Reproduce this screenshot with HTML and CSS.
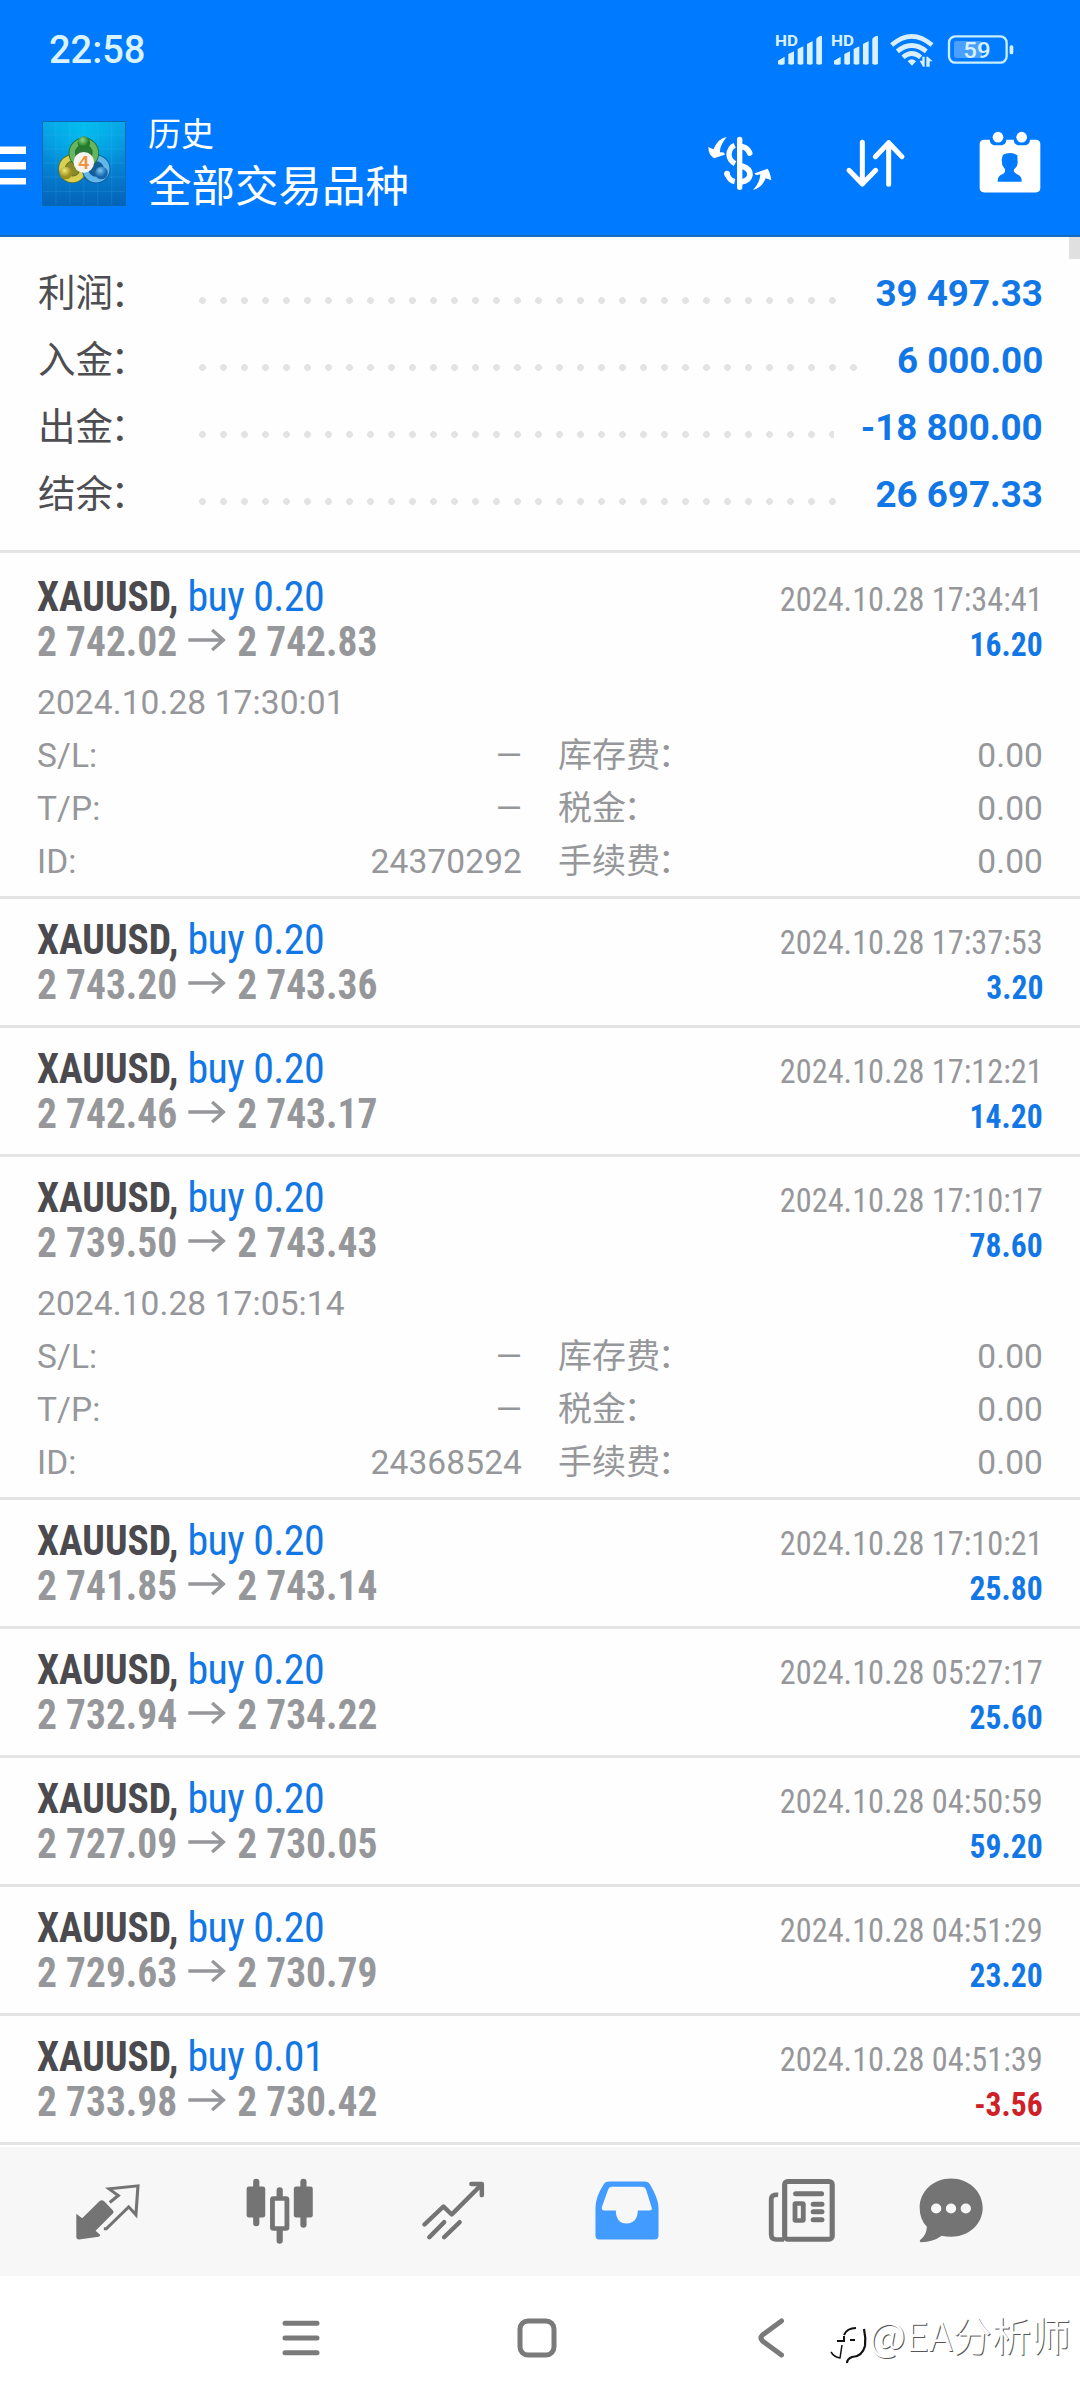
FILE: index.html
```
<!DOCTYPE html>
<html lang="zh-CN">
<head>
<meta charset="utf-8">
<title>历史</title>
<link rel="stylesheet" href="styles.css">
</head>
<body>
<header class="header">
  <div class="status">
    <span class="clock">22:58</span>
    <svg class="signal" viewBox="345 90 145 120"><text class="hd" x="345" y="137" textLength="69" lengthAdjust="spacingAndGlyphs">HD</text><path d="M354 192v-10l20-12v22q-3 3-10 2q-8 1-10-2zM385 192v-30l17-8v38q-8 4-17 0zM413 192v-45l17-8v53q-8 4-17 0zM441 192v-60l17-9v69q-8 4-17 0zM469 192v-74q2-9 17-11v85q-8 4-17 0z"/></svg>
    <svg class="signal second" viewBox="345 90 145 120"><text class="hd" x="345" y="137" textLength="69" lengthAdjust="spacingAndGlyphs">HD</text><path d="M354 192v-10l20-12v22q-3 3-10 2q-8 1-10-2zM385 192v-30l17-8v38q-8 4-17 0zM413 192v-45l17-8v53q-8 4-17 0zM441 192v-60l17-9v69q-8 4-17 0zM469 192v-74q2-9 17-11v85q-8 4-17 0z"/></svg>
    <svg class="wifi" viewBox="690 90 132 120"><g fill="none" stroke="#d9efff" stroke-width="14"><path d="M695 135Q755 83 816 135"/><path d="M712 154Q755 119 799 154"/><path d="M729 172Q755 149 782 172"/></g><path d="M743 184q12-12 25 0l-12 13zM779 182h8v-12h7v30h-5zM799 200v-30h4l15 14h-9v16z"/></svg>
    <svg class="battery" viewBox="860 90 202 120"><rect x="881" y="123" width="84" height="51" rx="7" fill="#4ba0ff"/><rect x="866" y="109" width="173" height="79" rx="19" fill="none" stroke="#c9eeff" stroke-width="7"/><rect x="1048" y="136" width="11" height="27" rx="5"/><text class="level" x="909" y="174" textLength="82" lengthAdjust="spacingAndGlyphs">59</text></svg>
  </div>
  <div class="appbar">
    <svg class="menu" viewBox="0 0 26 40"><path d="M0 1.500h26v7.500H0zM0 17h26v7.500H0zM0 33h26v6.500H0z"/></svg>
    <svg class="logo" viewBox="36 34 253 255" preserveAspectRatio="none">
      <defs>
        <linearGradient id="sky" x1="0" y1="0" x2="0" y2="1"><stop offset="0" stop-color="#0aa3e6"/><stop offset=".5" stop-color="#0585d4"/><stop offset="1" stop-color="#0462b8"/></linearGradient>
        <radialGradient id="glow" cx=".5" cy=".08" r=".6"><stop offset="0" stop-color="#00c0f0" stop-opacity=".9"/><stop offset="1" stop-color="#00c0f0" stop-opacity="0"/></radialGradient>
        <radialGradient id="green" cx=".4" cy=".3"><stop offset="0" stop-color="#8fd884"/><stop offset="1" stop-color="#237a2b"/></radialGradient>
        <radialGradient id="gold" cx=".4" cy=".3"><stop offset="0" stop-color="#f1e978"/><stop offset="1" stop-color="#9c8f1c"/></radialGradient>
        <radialGradient id="blue" cx=".4" cy=".3"><stop offset="0" stop-color="#7fc8f3"/><stop offset="1" stop-color="#1666ac"/></radialGradient>
      </defs>
      <path fill="url(#sky)" d="M36 34h253v255H36z"/><path fill="url(#glow)" d="M36 34h253v255H36z"/>
      <path stroke="#5cc4f4" stroke-opacity=".25" stroke-width="2" fill="none" d="M37 76h251M37 118h251M37 160h251M37 202h251M37 245h251M78 35v253M120 35v253M162 35v253M204 35v253M246 35v253"/>
      <path fill="none" stroke="#0b66b4" stroke-width="3" d="M37.500 35.500h250v252h-250z"/>
      <path d="M90 197Q84 145 119 134Q126 94 161 80Q201 90 206 134Q239 149 235 194Q209 229 161 207Q115 235 90 197" fill="#0a5b95" opacity=".5"/>
      <circle cx="128" cy="177" r="32" fill="#8a8828" stroke="#5f7225" stroke-width="22"/><circle cx="128" cy="177" r="32" fill="none" stroke="#d8d04e" stroke-width="17"/>
      <circle cx="199" cy="178" r="32" fill="#155f99" stroke="#0d5c9b" stroke-width="22"/><circle cx="199" cy="178" r="32" fill="none" stroke="#62b6ea" stroke-width="17"/>
      <circle cx="162" cy="130" r="35" fill="#2c7a38" stroke="#1c6b2d" stroke-width="22"/><circle cx="162" cy="130" r="35" fill="none" stroke="#67b55c" stroke-width="17"/>
      <circle cx="162" cy="99" r="19" fill="url(#green)"/><circle cx="108" cy="190" r="19" fill="url(#gold)"/><circle cx="215" cy="190" r="19" fill="url(#blue)"/>
      <circle cx="162" cy="158" r="31" fill="#f5f4f1"/><text class="four" x="162" y="179" text-anchor="middle">4</text>
    </svg>
    <div class="titles"><div class="small">历史</div><div class="large">全部交易品种</div></div>
    <svg class="dollar" viewBox="140 405 200 171"><g fill="none" stroke="#fff"><path stroke-width="16" stroke-linecap="round" d="M238 418v144"/><path stroke-width="16" d="M223 436Q207 443 206 464Q207 482 224 491M223 545Q205 541 199 518" /><path stroke-width="17" stroke-linecap="round" d="M246 440Q262 443 268 459M246 499Q269 506 269 524Q267 541 246 545"/></g><circle cx="200" cy="521" r="8.500"/><path d="M199 411Q174 414 159 448L144 441Q144 464 161 475L193 464Q194 455 179 457Q177 438 199 411zM278 570Q305 563 316 535L333 541Q330 519 322 506L283 520Q283 528 300 523Q299 548 278 570z"/></svg>
    <svg class="sort" viewBox="555 414 183 153"><path fill="none" stroke="#fff" stroke-width="15" stroke-linecap="round" stroke-linejoin="round" d="M607 427v125M567 511l40 41l40-41M686 553V428M646 470l40-42l40 42"/></svg>
    <svg class="calendar" viewBox="955 390.500 192 200"><path fill-rule="evenodd" d="M974 420H990Q991 435 1003 436H1027Q1039 435 1040 420H1062Q1063 435 1075 436H1098Q1110 435 1111 420H1128Q1142 420 1142 434V564Q1142 578 1128 578H974Q960 578 960 564V434Q960 420 974 420zM1029 467L1026 480L1028 496L1036 508Q1038 521 1026 524Q1013 529 1014 546H1086Q1087 529 1074 524Q1060 518 1063 508Q1074 500 1074 488L1073 466Q1058 457 1046 460Q1032 461 1029 467z"/><circle cx="1015" cy="412" r="16"/><circle cx="1086" cy="412" r="16"/></svg>
  </div>
</header>
<div class="scrollbar"></div>
<section class="summary">
  <div class="sum"><span class="label">利润<span class="colon">：</span></span><i class="dots"></i><b>39 497.33</b></div>
  <div class="sum"><span class="label">入金<span class="colon">：</span></span><i class="dots"></i><b>6 000.00</b></div>
  <div class="sum"><span class="label">出金<span class="colon">：</span></span><i class="dots"></i><b>-18 800.00</b></div>
  <div class="sum"><span class="label">结余<span class="colon">：</span></span><i class="dots"></i><b>26 697.33</b></div>
</section>
<main class="deals">
  <article class="deal open">
    <div class="line"><span class="name"><b>XAUUSD,</b> buy 0.20</span><span class="time">2024.10.28 17:34:41</span></div>
    <div class="line"><span class="price">2 742.02<svg class="arrow" viewBox="0 0 40 22"><path d="M0 11h37M25.500 1l12 10l-12 10"/></svg>2 742.83</span><b class="profit">16.20</b></div>
    <div class="details">
      <div class="date">2024.10.28 17:30:01</div>
      <div class="cell"><span>S/L:</span><span>—</span></div><div class="cell"><span class="zh">库存费<span class="colon">：</span></span><span>0.00</span></div>
      <div class="cell"><span>T/P:</span><span>—</span></div><div class="cell"><span class="zh">税金<span class="colon">：</span></span><span>0.00</span></div>
      <div class="cell"><span>ID:</span><span>24370292</span></div><div class="cell"><span class="zh">手续费<span class="colon">：</span></span><span>0.00</span></div>
    </div>
  </article>
  <article class="deal">
    <div class="line"><span class="name"><b>XAUUSD,</b> buy 0.20</span><span class="time">2024.10.28 17:37:53</span></div>
    <div class="line"><span class="price">2 743.20<svg class="arrow" viewBox="0 0 40 22"><path d="M0 11h37M25.500 1l12 10l-12 10"/></svg>2 743.36</span><b class="profit">3.20</b></div>
  </article>
  <article class="deal">
    <div class="line"><span class="name"><b>XAUUSD,</b> buy 0.20</span><span class="time">2024.10.28 17:12:21</span></div>
    <div class="line"><span class="price">2 742.46<svg class="arrow" viewBox="0 0 40 22"><path d="M0 11h37M25.500 1l12 10l-12 10"/></svg>2 743.17</span><b class="profit">14.20</b></div>
  </article>
  <article class="deal open">
    <div class="line"><span class="name"><b>XAUUSD,</b> buy 0.20</span><span class="time">2024.10.28 17:10:17</span></div>
    <div class="line"><span class="price">2 739.50<svg class="arrow" viewBox="0 0 40 22"><path d="M0 11h37M25.500 1l12 10l-12 10"/></svg>2 743.43</span><b class="profit">78.60</b></div>
    <div class="details">
      <div class="date">2024.10.28 17:05:14</div>
      <div class="cell"><span>S/L:</span><span>—</span></div><div class="cell"><span class="zh">库存费<span class="colon">：</span></span><span>0.00</span></div>
      <div class="cell"><span>T/P:</span><span>—</span></div><div class="cell"><span class="zh">税金<span class="colon">：</span></span><span>0.00</span></div>
      <div class="cell"><span>ID:</span><span>24368524</span></div><div class="cell"><span class="zh">手续费<span class="colon">：</span></span><span>0.00</span></div>
    </div>
  </article>
  <article class="deal">
    <div class="line"><span class="name"><b>XAUUSD,</b> buy 0.20</span><span class="time">2024.10.28 17:10:21</span></div>
    <div class="line"><span class="price">2 741.85<svg class="arrow" viewBox="0 0 40 22"><path d="M0 11h37M25.500 1l12 10l-12 10"/></svg>2 743.14</span><b class="profit">25.80</b></div>
  </article>
  <article class="deal">
    <div class="line"><span class="name"><b>XAUUSD,</b> buy 0.20</span><span class="time">2024.10.28 05:27:17</span></div>
    <div class="line"><span class="price">2 732.94<svg class="arrow" viewBox="0 0 40 22"><path d="M0 11h37M25.500 1l12 10l-12 10"/></svg>2 734.22</span><b class="profit">25.60</b></div>
  </article>
  <article class="deal">
    <div class="line"><span class="name"><b>XAUUSD,</b> buy 0.20</span><span class="time">2024.10.28 04:50:59</span></div>
    <div class="line"><span class="price">2 727.09<svg class="arrow" viewBox="0 0 40 22"><path d="M0 11h37M25.500 1l12 10l-12 10"/></svg>2 730.05</span><b class="profit">59.20</b></div>
  </article>
  <article class="deal">
    <div class="line"><span class="name"><b>XAUUSD,</b> buy 0.20</span><span class="time">2024.10.28 04:51:29</span></div>
    <div class="line"><span class="price">2 729.63<svg class="arrow" viewBox="0 0 40 22"><path d="M0 11h37M25.500 1l12 10l-12 10"/></svg>2 730.79</span><b class="profit">23.20</b></div>
  </article>
  <article class="deal">
    <div class="line"><span class="name"><b>XAUUSD,</b> buy 0.01</span><span class="time">2024.10.28 04:51:39</span></div>
    <div class="line"><span class="price">2 733.98<svg class="arrow" viewBox="0 0 40 22"><path d="M0 11h37M25.500 1l12 10l-12 10"/></svg>2 730.42</span><b class="profit loss">-3.56</b></div>
  </article>
</main>
<nav class="tabs">
  <svg viewBox="208.500 136.500 209 216" preserveAspectRatio="none"><path d="M221 250L238 263L288 212Q295 206 302 212L327 239Q332 244 327 249L277 301L290 313Q291 318 286 319L229 327Q221 327 221 319z"/><path fill="none" stroke="#747474" stroke-width="9" d="M318 216L343 195L316 175L400 166L394 253L373 229L308 295H301"/></svg>
  <svg viewBox="712.300 136.500 209 216" preserveAspectRatio="none"><rect x="717" y="168" width="54" height="93" rx="7"/><rect x="854" y="168" width="55" height="93" rx="7"/><rect x="792" y="204" width="42" height="90" rx="3" fill="none" stroke="#747474" stroke-width="14"/><path fill="none" stroke="#747474" stroke-width="18" stroke-linecap="round" d="M745 154v124M882 154v129M813 179v20M813 302v29"/></svg>
  <svg viewBox="1216.100 136.500 209 216" preserveAspectRatio="none"><path fill="none" stroke="#747474" stroke-width="13" stroke-linecap="round" stroke-linejoin="round" d="M1232 282L1287 228L1311 252L1395 165M1368 160.500H1398.500V194M1246 320L1289 275M1289 320L1334 275"/></svg>
  <svg viewBox="151.900 136.500 209 216" preserveAspectRatio="none"><path fill="#429bff" fill-rule="evenodd" d="M203 153H306Q316 153 320 161Q345 204 345 232V316Q345 327 334 327H173Q162 327 162 316V232Q162 199 187 160Q191 153 203 153zM210 169Q202 169 199 176L181 229Q178 240 187 240H221Q222 279 252 279Q284 278 285 240H318Q328 240 325 231L309 178Q306 169 297 169z"/></svg>
  <svg viewBox="655.800 136.500 209 216" preserveAspectRatio="none"><g fill="none" stroke="#747474"><rect x="710" y="153" width="138" height="173" rx="9" stroke-width="15"/><path stroke-width="14" d="M691 193Q671 191 671 207V312Q671 327 686 327H708"/><rect x="740" y="219" width="24" height="51" rx="2" stroke-width="14"/><path stroke-width="15" stroke-linecap="round" d="M742 190h75M793 221h25M793 244h25M793 268h25"/></g></svg>
  <svg class="chat" viewBox="1088.500 136.500 209 216" preserveAspectRatio="none"><path fill-rule="evenodd" d="M1193 144C1244 144 1285 182 1285 232S1244 319 1193 319Q1178 319 1166 316Q1141 335 1106 335Q1099 333 1105 327Q1122 314 1123 289Q1102 267 1102 232C1102 182 1142 144 1193 144zM1135 234a15 15 0 1 0 30 0a15 15 0 1 0-30 0M1178 234a15 15 0 1 0 30 0a15 15 0 1 0-30 0M1221 234a15 15 0 1 0 30 0a15 15 0 1 0-30 0"/></svg>
</nav>
<footer class="system">
  <svg class="recent" viewBox="0 0 38 40"><path d="M3 5.300h32M3 20h32M3 34.700h32"/></svg>
  <svg class="home" viewBox="0 0 40 40"><rect x="3" y="3" width="34" height="34" rx="8"/></svg>
  <svg class="back" viewBox="0 0 26 40"><path d="M23.500 3L4.500 17Q1.500 20 4.500 23L23.500 37"/></svg>
</footer>
<div class="watermark"><svg viewBox="830 2324 38 44"><g fill="none" stroke="#111"><path stroke-width="2" d="M844 2335Q847 2328 856 2328M837 2341H844V2336M850 2340H855"/><path stroke-width="1.500" d="M831 2352Q834 2357 840 2358L842 2345"/><path stroke-width="2.200" d="M864 2329Q866 2338 865 2346Q862 2357 852 2357Q847 2359 847 2363"/></g></svg><span>@EA分析师</span></div>
</body>
</html>
```
FILE: styles.css
```
* { box-sizing: border-box; }
body { margin: 0; width: 1080px; height: 2400px; overflow: hidden; position: relative; background: #fefefe; font-family: Roboto, "Noto Sans CJK SC", sans-serif; }
svg { display: block; flex: none; }
.header { height: 237px; background: #007aff; border-bottom: 2px solid #176cbf; color: #fff; }
.header svg { fill: #fff; }
.status { height: 100px; padding: 0 66px 0 49px; display: flex; align-items: center; }
.clock { margin-right: auto; font-size: 38px; line-height: 100px; font-weight: 500; color: #d9f3ff; }
.header .status svg { height: 40px; fill: #d9f1ff; }
.signal { width: 48.300px; }
.second { margin-left: 7.700px; }
.wifi { width: 44px; margin-left: 10.700px; }
.battery { width: 67.300px; margin-left: 12.700px; }
.hd { font: 700 44px Roboto, sans-serif; }
.level { font: 500 68px Roboto, sans-serif; }
.appbar { height: 127px; padding-right: 37.700px; display: flex; align-items: center; }
.menu { width: 26px; height: 40px; margin-top: 3px; }
.logo { width: 84px; height: 85px; margin-left: 16px; }
.four { font: bold 57px "Liberation Sans", sans-serif; fill: #ee9440; }
.titles { margin: 0 auto 0 22px; font-weight: 400; }
.small { font-size: 33px; line-height: 48px; }
.large { font-size: 43.500px; line-height: 58px; }
.dollar { width: 66.700px; height: 57px; }
.sort { width: 61px; height: 51px; margin-left: 71.700px; }
.calendar { width: 64px; height: 66.700px; margin-left: 72.300px; }
.scrollbar { position: absolute; right: 0; top: 237px; width: 11px; height: 22px; background: #e0e0e0; }
.summary { height: 316px; padding: 22.600px 37px 0 38px; border-bottom: 3px solid #e4e4e4; }
.sum { height: 67px; line-height: 67px; display: flex; font-size: 37.500px; color: #1277e6; white-space: nowrap; }
.sum b { transform: scaleX(.98); transform-origin: right; }
.label { width: 154.300px; color: #4d4d52; }
.colon { margin-left: -2.500px; }
.dots { flex: 1; height: 7px; margin: 37.600px 23.500px 0 0; background: radial-gradient(circle, #e3e3e3 3.100px, transparent 3.700px) left center / 21px 7px repeat-x; }
.deals { padding-top: 3px; }
.deal { height: 129px; padding: 18px 37px 0 37px; border-bottom: 3px solid #e4e4e4; font-family: "Roboto Condensed", sans-serif; }
.open { height: 343px; }
.line { display: flex; justify-content: space-between; align-items: baseline; height: 45px; line-height: 45px; white-space: nowrap; }
.name { font-size: 42px; letter-spacing: -.600px; color: #1277e6; }
.name b { display: inline-block; margin-right: -9px; letter-spacing: 0; color: #4a4a4f; transform: scaleX(.94); transform-origin: left; }
.price { font-size: 42px; font-weight: 700; color: #96979a; transform: scaleX(.939); transform-origin: left; }
.arrow { display: inline-block; width: 40px; height: 22px; margin: 0 12px; vertical-align: 5px; fill: none; stroke: #96979a; stroke-width: 3.500px; }
.time { font-size: 34px; color: #96979a; transform: scaleX(.95); transform-origin: right; }
.profit { font-size: 34px; color: #1277e6; transform: scaleX(.93); transform-origin: right; }
.loss { color: #cf2027; }
.details { margin-top: 12px; display: grid; grid-template-columns: 485px 485px; column-gap: 36px; grid-auto-rows: 53px; line-height: 53px; font-family: Roboto, "Noto Sans CJK SC", sans-serif; font-size: 33.500px; letter-spacing: .100px; font-weight: 400; color: #96979a; }
.date { grid-column: 1 / -1; }
.cell { display: flex; justify-content: space-between; }
.zh { font-size: 34px; }
.tabs { height: 129px; margin-top: 2px; padding-left: 21px; display: flex; align-items: center; background: #f7f7f7; }
.tabs svg { width: 72px; height: 72px; margin: 0 50.750px; fill: #747474; }
.tabs .chat { margin: 0 0 0 26.300px; }
.system { height: 124px; display: flex; align-items: center; background: #fff; }
.system svg { height: 40px; fill: none; stroke: #7a7a7a; stroke-width: 5px; stroke-linecap: round; }
.recent { width: 38px; margin-left: 282px; }
.home { width: 40px; margin-left: 197px; }
.back { width: 26px; margin-left: 201px; }
.watermark { position: absolute; left: 830px; top: 2307px; display: flex; align-items: flex-start; }
.watermark svg { width: 38px; height: 44px; margin-top: 17px; }
.watermark span { margin-left: 1px; font: 350 39.300px/54px "Noto Sans CJK SC", sans-serif; color: #fff; text-shadow: 1px 1px 0 #555; white-space: nowrap; }
```
